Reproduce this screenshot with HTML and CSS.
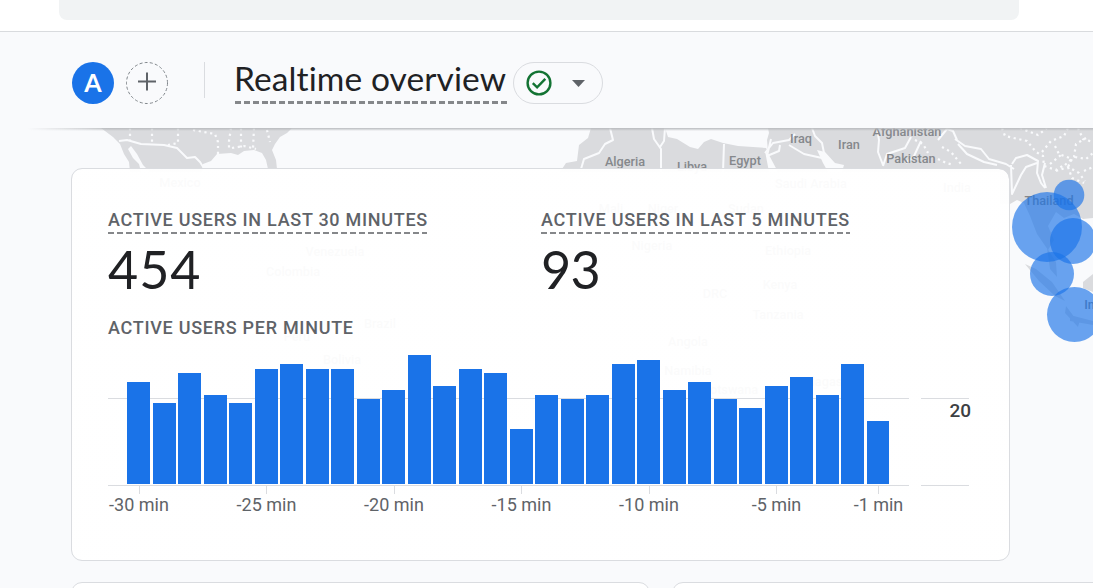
FILE: index.html
```html
<!DOCTYPE html>
<html lang="en">
<head>
<meta charset="utf-8">
<title>Realtime overview</title>
<link rel="stylesheet" href="styles.css">
</head>
<body>
<div class="topbar"><div class="search"></div></div>
<header class="header">
  <div class="avatar">A</div>
  <button class="add" aria-label="Add comparison">
    <svg width="42" height="42" viewBox="0 0 42 42"><circle class="add-ring" cx="21" cy="21" r="20.5"/><path class="add-plus" d="M21 10.500v18M12 19.500h18"/></svg>
  </button>
  <div class="divider"></div>
  <h1 class="title">Realtime overview</h1>
  <button class="status" aria-label="Data quality">
    <svg class="check" width="26" height="26" viewBox="0 0 26 26"><circle cx="13" cy="13" r="11.4"/><path d="M6.8 13.2l4.3 4.1 8.2-8.5"/></svg>
    <svg class="caret" width="13" height="7" viewBox="0 0 13 7"><path d="M0 0h13L6.500 7z"/></svg>
  </button>
</header>
<main class="main">
  <svg class="map" width="1093" height="460" viewBox="0 128 1093 460">
    <g class="land">
      <path d="M101 128H292L287 133 280 137 275 144 272 150 276 160 277 169H268L266 160 262 153 254 150 244 151 238 155 231 153 217 154 211 161 203 164 202 172H197L150 172 143 165 137 154 131 146 128 149 133 158 139 164 141 172H130L129 162 124 154 120 144 113 137Z"/>
      <path d="M591 128H665L668 137 677 139 690 147 698 149 704 142 711 139 723 143 738 146 753 147 766 148 768 152 767 140 769 133 768 128H1093V218L1083 219 1074 214 1064 218 1056 212 1048 226 1054 240 1048 250 1037 234 1030 216 1024 203 1017 200 1010 204H1000V172H560L566 163 577 161 579 145 588 138Z"/>
      <path d="M1025 264l11 5 16 13 13 19-10-5-16-15zM1047 248l9 14 1 15-7-8zM1083 282l10-8v18l-10-4zM1066 306l9 12 5 2-2 7-13-14zM1070 315l23 6v4l-23-4z"/>
    </g>
    <g class="water">
      <path d="M765 151l4 4 9 17h-9zM817 150l8 2 10 11 9 2-2 7h-14l-5-9z"/>
    </g>
    <g class="borders">
      <path d="M119 141l8-1 14 4 23 1 13 3 10 10 8-1 5 5 7 11"/>
      <path d="M610 128l3 12-8 4-6 9-15 6-3 10M652 128l2 11 7 10v23M665 128l-1 13-4 6M724 144l-1 28"/>
      <path d="M765 153l8-10 16-3 6-6M771 139l-4 17 12-5 1-6M789 145l15 9 18 4M812 128l3 8 7 7 2 10M877 128l2 12-1 12 5 13M883 166l4-12 18-6 6-11M906 163l8-7 7-15M938 140l9-11 6 2 4 9M955 139l10 7 16 3 8 10 17 5 8 5M958 144l9 10 17 8 13 3M1012 164l4-6 11-3 11 6-1 12 4 10 4 5M1011 165l1 29 9-19 5-8 11-4M1046 188l-4-13 3-12"/>
    </g>
    <g class="states">
      <path d="M130 128v13M152 128v16M178 128v15l-10 2M193 130l22 4 3 8v14M231 128l-2 13v10M241 128v22M254 128l-1 21M232 148l12-2 12 3M267 130l3 12"/>
      <path d="M1002 128l3 8 22 5 9 11 7 4 1 10 12 4 8-5M1020 128l18 7 9-7M1042 152l9-11 13-5 4-8M1055 146l4 8 13 5-4 8M1065 165l9-8 2-13 10-6M1075 157l11 2 7-6M1056 171l12-4 11 6 6 8M1068 167l4 11 12 5M1078 128l5 11 10 3M1050 164l11-9M1084 171l9-4M915 140l8 4 5 9M942 147l9 5 10 12M938 159l8 4 8 2"/>
    </g>
    <g class="labels">
      <text x="625" y="166">Algeria</text><text x="692" y="171">Libya</text><text x="745" y="165">Egypt</text>
      <text x="801" y="143">Iraq</text><text x="849" y="149">Iran</text><text x="907" y="136">Afghanistan</text><text x="911" y="163">Pakistan</text>
      <text x="1049" y="205">Thailand</text><text x="1112" y="309">Indonesia</text>
    </g>
    <g class="labels">
      <text x="180" y="187">Mexico</text><text x="335" y="256">Venezuela</text><text x="293" y="276">Colombia</text><text x="380" y="328">Brazil</text><text x="297" y="341">Peru</text><text x="342" y="364">Bolivia</text>
      <text x="811" y="188">Saudi Arabia</text><text x="957" y="192">India</text><text x="611" y="213">Mali</text><text x="663" y="213">Niger</text><text x="746" y="213">Sudan</text><text x="652" y="250">Nigeria</text><text x="788" y="255">Ethiopia</text>
      <text x="780" y="289">Kenya</text><text x="715" y="298">DRC</text><text x="778" y="319">Tanzania</text><text x="688" y="346">Angola</text><text x="688" y="375">Namibia</text><text x="730" y="394">Botswana</text><text x="825" y="386">Madagascar</text>
    </g>
    <g class="bubbles">
      <circle cx="1047" cy="227" r="35"/><circle cx="1069" cy="195" r="15.300"/><circle cx="1073" cy="241" r="23"/><circle cx="1052" cy="274" r="22"/><circle cx="1074.500" cy="314.500" r="27.500"/>
    </g>
  </svg>
  <div class="edge"></div>
  <section class="card">
    <div class="metrics">
      <div class="metric"><div class="label dashed w30">ACTIVE USERS IN LAST 30 MINUTES</div><div class="value value-wide">454</div></div>
      <div class="metric"><div class="label dashed w5">ACTIVE USERS IN LAST 5 MINUTES</div><div class="value">93</div></div>
    </div>
    <div class="label permin">ACTIVE USERS PER MINUTE</div>
    <div class="chart">
      <div class="plot">
        <div class="bars">
          <i style="height:102px"></i><i style="height:81px"></i><i style="height:111px"></i><i style="height:89px"></i><i style="height:81px"></i><i style="height:115px"></i><i style="height:120px"></i><i style="height:115px"></i><i style="height:115px"></i><i style="height:85px"></i>
          <i style="height:94px"></i><i style="height:129px"></i><i style="height:98px"></i><i style="height:115px"></i><i style="height:111px"></i><i style="height:55px"></i><i style="height:89px"></i><i style="height:85px"></i><i style="height:89px"></i><i style="height:120px"></i>
          <i style="height:124px"></i><i style="height:94px"></i><i style="height:102px"></i><i style="height:85px"></i><i style="height:76px"></i><i style="height:98px"></i><i style="height:107px"></i><i style="height:89px"></i><i style="height:120px"></i><i style="height:63px"></i>
        </div>
        <div class="ticks">
          <span class="tick">-30 min</span><span class="tick">-25 min</span><span class="tick">-20 min</span><span class="tick">-15 min</span><span class="tick">-10 min</span><span class="tick tick-5">-5 min</span><span class="tick tick-1">-1 min</span>
        </div>
      </div>
      <div class="scale">20</div>
    </div>
  </section>
  <div class="next"><div class="panel"></div><div class="panel panel-wide"></div></div>
</main>
</body>
</html>
```
FILE: styles.css
```css
* { box-sizing: border-box; }
html { overflow: hidden; }
body { margin: 0; width: 1093px; height: 588px; overflow: hidden; background: #f9fafc; font-family: Roboto, "Liberation Sans", sans-serif; color: #202124; }
button { padding: 0; border: 0; background: none; }
svg { display: block; }

.topbar { height: 32px; background: #fff; border-bottom: 1px solid #d9dbde; padding-left: 59px; }
.search { width: 960px; height: 20px; background: #f1f3f4; border-radius: 0 0 8px 8px; }

.header { height: 96px; display: flex; align-items: flex-start; padding: 30px 0 0 72px; }
.avatar { width: 42px; height: 42px; border-radius: 50%; background: #1a73e8; color: #fff; font: 700 25px/40px Lato, sans-serif; text-align: center; }
.add { margin-left: 12px; width: 42px; height: 42px; }
.add-ring { fill: none; stroke: #80868b; stroke-width: 1; stroke-dasharray: 3 2.2; }
.add-plus { fill: none; stroke: #5f6368; stroke-width: 2; }
.divider { width: 1px; height: 36px; margin: 0 30px 0 36px; background: #dadce0; }
.title { margin: 0; width: 272px; height: 42px; white-space: nowrap; font: 400 33.500px/33px Lato, sans-serif; letter-spacing: .1px; text-indent: -1px; background: repeating-linear-gradient(90deg, #85878a 0 6px, transparent 6px 8.870px) 0 39px / 100% 3px no-repeat; }
.status { margin-left: 6px; width: 90px; height: 42px; border: 1px solid #dadce0; border-radius: 21px; display: flex; align-items: center; padding-left: 12px; gap: 20px; }
.check { fill: none; stroke: #137333; stroke-width: 2.400; }
.caret { fill: #5f6368; }

.main { position: relative; height: 460px; overflow: hidden; padding: 40px 0 0 71px; }
.map { position: absolute; left: 0; top: 0; }
.land { fill: #dadbde; }
.water { fill: #f9fafc; }
.borders { fill: none; stroke: #f9fafc; stroke-width: 2; stroke-linejoin: round; }
.states { fill: none; stroke: #f9fafc; stroke-width: 2.200; stroke-dasharray: 2.200 3.600; }
.labels { font: 500 12.700px Roboto, sans-serif; fill: #85888c; text-anchor: middle; }
.bubbles { fill: #1a73e8; fill-opacity: .65; }
.edge { position: absolute; left: 0; right: 0; top: 0; height: 3px; background: linear-gradient(#b8babd, rgba(184,186,189,0)); -webkit-mask-image: linear-gradient(90deg, transparent 28px, #000 110px); mask-image: linear-gradient(90deg, transparent 28px, #000 110px); }

.card { position: relative; width: 939px; height: 393px; background: linear-gradient(rgba(255,255,255,.965), rgba(255,255,255,.965)) padding-box; border: 1px solid #dadce0; border-radius: 11px; padding: 39px 36px 0; }
.metrics { display: grid; grid-template-columns: 433px 1fr; height: 108px; }
.label { font-size: 18px; font-weight: 500; line-height: 24px; letter-spacing: .72px; color: #5f6368; white-space: nowrap; }
.dashed { height: 26px; background: repeating-linear-gradient(90deg, #85878a 0 6px, transparent 6px 8.970px) 0 24px / 100% 2px no-repeat; }
.w30 { width: 319px; }
.w5 { width: 309px; }
.value { font: 400 52px/64px Lato, sans-serif; margin-top: 3px; letter-spacing: -.7px; }
.value-wide { letter-spacing: 1px; }
.chart { display: flex; gap: 12px; margin-top: 15px; }
.plot { width: 801px; }
.bars { height: 131px; border-bottom: 1px solid #dadce0; padding: 0 19px 1px; display: flex; gap: 2.500px; align-items: flex-end; background: linear-gradient(#dadce0, #dadce0) 0 43px / 100% 1px no-repeat; }
.bars i { width: 23px; flex: none; background: #1a73e8; }
.bars i:last-child { width: 22.500px; }
.ticks { display: flex; gap: 47.500px; margin-left: -9px; height: 34px; }
.tick { flex: none; width: 80px; text-align: center; padding-top: 7px; font-size: 18px; line-height: 24px; color: #5f6368; white-space: nowrap; background: linear-gradient(#dadce0, #dadce0) 50% 0 / 1px 8px no-repeat; }
.tick-1 { margin-left: -25.500px; }
.scale { width: 50px; height: 131px; padding-top: 44px; text-align: right; font-size: 19px; font-weight: 500; line-height: 24px; color: #3c4043; background: linear-gradient(#dadce0, #dadce0) 0 43px / 48px 1px no-repeat, linear-gradient(#dadce0, #dadce0) 0 130px / 48px 1px no-repeat; }

.next { position: relative; display: flex; gap: 22px; margin-top: 21px; }
.panel { width: 579px; height: 40px; flex: none; background: #fff; border: 1px solid #dadce0; border-radius: 11px; }
.panel-wide { width: 600px; }
```
